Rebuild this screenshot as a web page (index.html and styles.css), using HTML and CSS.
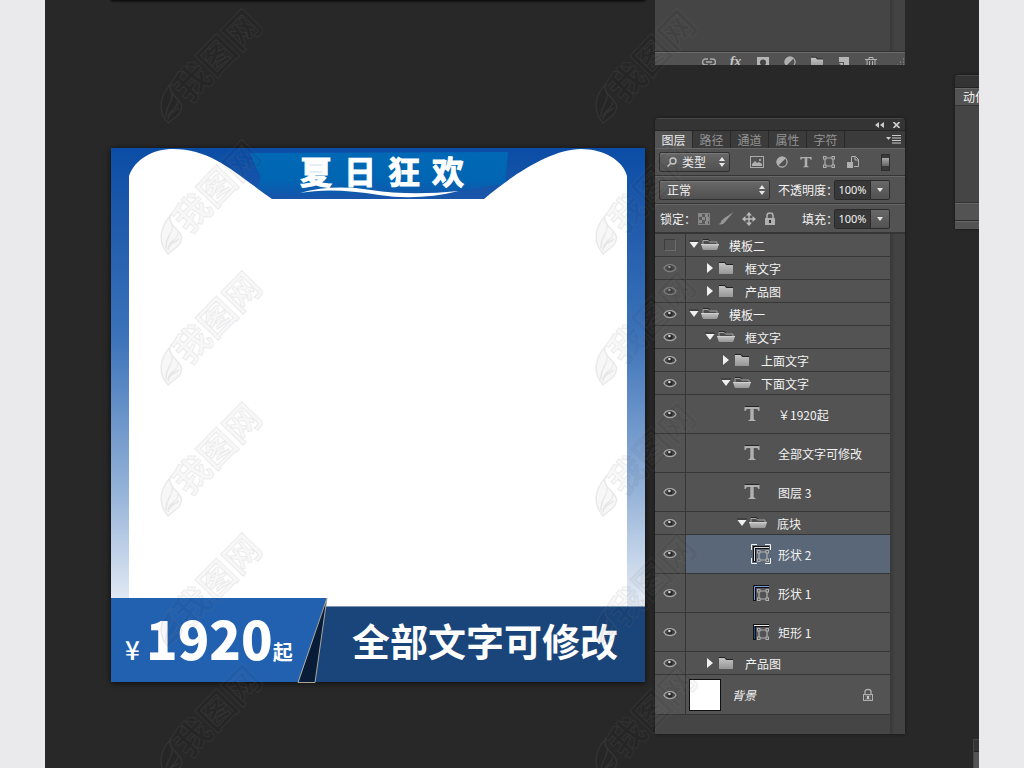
FILE: index.html
```html
<!DOCTYPE html>
<html lang="zh-CN">
<head>
<meta charset="utf-8">
<title>图层</title>
<link rel="stylesheet" href="styles.css">
</head>
<body>
<svg class="defs" aria-hidden="true">
  <defs>
    <linearGradient id="metal" x1="0" y1="0" x2="0" y2="1"><stop offset="0" stop-color="#c4c4c4"/><stop offset="1" stop-color="#969696"/></linearGradient>
    <symbol id="eye" viewBox="0 0 14 12"><path d="M1 6.2C3 1.4 11 1.4 13 6.2C11 10.6 3 10.6 1 6.2Z" fill="#484848" stroke="#a9a9a9" stroke-width="1.3"/><circle cx="7" cy="5.8" r="2.6" fill="#262626"/><circle cx="6.4" cy="5" r="1.3" fill="#d8d8d8"/></symbol>
    <symbol id="down" viewBox="0 0 10 10"><path d="M0 1H10" stroke="#333"/><path d="M.5 2H9.5L5 8Z" fill="#f0f0f0"/></symbol>
    <symbol id="right" viewBox="0 0 10 10"><path d="M2 0V10L8 5Z" fill="#f0f0f0"/></symbol>
    <symbol id="folder" viewBox="0 0 18 14"><path d="M2 1.5H8L9.5 3.5H16" fill="none" stroke="#222"/><path d="M2 2H7.5L9 4H16V13H2Z" fill="url(#metal)"/></symbol>
    <symbol id="folder-open" viewBox="0 0 18 14"><path d="M2 7V2.5H7L8.5 4H16V7" fill="#4c4c4c" stroke="#a5a5a5"/><path d="M2 1.5H7.5L9 3" fill="none" stroke="#252525"/><path d="M0 6H18L16.5 11Q16.3 12 15 12H3Q1.7 12 1.5 11Z" fill="url(#metal)"/><path d="M0 6.5H18" stroke="#d0d0d0"/></symbol>
    <symbol id="type" viewBox="0 0 16 16"><path d="M1 .5H15" stroke="#252525"/><path d="M.5 1H15.5V5H14.4Q14 2.9 12.5 2.9H9.7V12.5Q9.7 14 11.5 14V15H4.5V14Q6.3 14 6.3 12.5V2.9H3.5Q2 2.9 1.6 5H.5Z" fill="#b0b0b0"/></symbol>
    <symbol id="nodes" viewBox="0 0 12 12"><path d="M2 2H10V10H2Z" fill="none" stroke="#b0b0b0" stroke-width="1.2"/><g fill="#555" stroke="#b0b0b0"><rect x=".5" y=".5" width="2.5" height="2.5"/><rect x="9" y=".5" width="2.5" height="2.5"/><rect x=".5" y="9" width="2.5" height="2.5"/><rect x="9" y="9" width="2.5" height="2.5"/></g></symbol>
    <symbol id="lock" viewBox="0 0 12 14"><path d="M3 7V3.6Q3 1 6 1Q9 1 9 3.6V7" fill="none" stroke="#b0b0b0" stroke-width="1.6"/><rect x="1" y="6" width="10" height="7" fill="#b0b0b0"/><path d="M6 8V11" stroke="#333" stroke-width="2"/></symbol>
    <symbol id="lock-open" viewBox="0 0 12 14"><path d="M3 6V3.6Q3 1.5 6 1.5Q9 1.5 9 3.6V6" fill="none" stroke="#b0b0b0" stroke-width="1.3"/><rect x="1.5" y="6.5" width="9" height="6" fill="#555" stroke="#b0b0b0"/><path d="M3 8H9M3 11H9" stroke="#888"/><path d="M6 8V11" stroke="#c8c8c8" stroke-width="2"/></symbol>
    <symbol id="updown" viewBox="0 0 6 10"><path d="M0 4L3 0L6 4ZM0 6H6L3 10Z" fill="#e6e6e6"/></symbol>
    <symbol id="adjust" viewBox="0 0 12 12"><circle cx="6" cy="6" r="5.5" fill="#b0b0b0"/><path d="M9.6 2.4L2.4 9.6A5 5 0 0 0 9.6 2.4Z" fill="#505050"/><circle cx="6" cy="6" r="5" fill="none" stroke="#b0b0b0"/></symbol>
    <symbol id="leaf" viewBox="0 0 24 44"><path d="M9 43C-3 30 1 14 11 3C9 13 22 18 23 25C24 34 15 37 9 43ZM7 37C5 25 15 22 13 12M9 39C8 29 20 29 19 20M10 36C12 30 17 31 20 27" /></symbol>
  </defs>
</svg>

<main class="workspace">
  <div class="upper-doc"></div>

  <section class="poster">
    <svg class="poster-art" viewBox="0 0 534 534" aria-hidden="true">
      <defs>
        <linearGradient id="sky" x1="0" y1="0" x2="0" y2="1"><stop offset="0" stop-color="#0b4da6"/><stop offset=".12" stop-color="#1d59ab"/><stop offset=".35" stop-color="#3b72b9"/><stop offset=".65" stop-color="#97b4d9"/><stop offset=".84" stop-color="#dfe8f3"/><stop offset="1" stop-color="#fff"/></linearGradient>
        <linearGradient id="band" x1="0" y1="0" x2="0" y2="1"><stop offset="0" stop-color="#0068b4"/><stop offset=".6" stop-color="#0066b3"/><stop offset="1" stop-color="#1455aa"/></linearGradient>
      </defs>
      <rect width="534" height="534" fill="url(#sky)"/>
      <path d="M139 5L397 4L394 36L340 44L160 49L146 40L150 30Z" fill="url(#band)"/>
      <path d="M18 460V28C24 11 42 1 62 1C101 1 124 25 161 51H373C400 28 440 1 470 1C492 1 512 12 516 28V460Z" fill="#fff"/>
      <path d="M189 45Q221 36 260 42T348 43Q307 53 268 47Q221 39 189 45Z" fill="#fff"/>
      <path d="M205 458H534V534H200Z" fill="#1a457a"/>
      <path d="M205 458.500H534" stroke="#7b93b3"/>
      <path d="M0 450H216L187 534H0Z" fill="#2261b0"/>
      <path d="M216 450L187 534.500H204Z" fill="#081c38" stroke="#aaa69d"/>
    </svg>
    <h1 class="poster-title"><span>夏</span><span>日</span><span>狂</span><span>欢</span></h1>
    <div class="poster-foot">
      <p class="price"><span class="yen">¥</span><strong>1920</strong><span class="from">起</span></p>
      <p class="slogan">全部文字可修改</p>
    </div>
  </section>

  <section class="panel upper-panel">
    <div class="panel-space"><div class="scroll-track"></div></div>
    <div class="tools">
      <button aria-label="链接"><svg width="14" height="12" viewBox="0 0 14 12" fill="none" stroke="#aaa" stroke-width="1.400"><path d="M6 3H3.500A3 3 0 0 0 3.500 9H6M8 3H10.500A3 3 0 0 1 10.500 9H8M4 6H10"/></svg></button>
      <button aria-label="效果" class="fx">fx</button>
      <button aria-label="蒙版"><svg width="14" height="12" viewBox="0 0 14 12"><path d="M1 1H13V12H1Z" fill="#b5b5b5"/><circle cx="7" cy="6.500" r="3" fill="#444"/></svg></button>
      <button aria-label="调整"><svg width="12" height="12"><use href="#adjust"/></svg></button>
      <button aria-label="新建组"><svg width="16" height="12"><use href="#folder"/></svg></button>
      <button aria-label="新建图层"><svg width="12" height="12" viewBox="0 0 12 12"><path d="M1 1H11V11H6V6H1Z" fill="#b5b5b5"/><path d="M1 7H5V11Z" fill="#b5b5b5"/></svg></button>
      <button aria-label="删除"><svg width="12" height="14" viewBox="0 0 12 14" fill="none" stroke="#b5b5b5"><path d="M0 3.500H12M4 3V1.500H8V3M2 4V14M4.500 5V14M7.500 5V14M10 4V14"/></svg></button>
      <svg class="grip" width="8" height="8" viewBox="0 0 8 8"><path d="M6 1H7M3 4H4M6 4H7M0 7H1M3 7H4M6 7H7" stroke="#999"/></svg>
    </div>
  </section>

  <section class="panel layers">
    <header class="titlebar">
      <button aria-label="折叠"><svg width="9" height="6" viewBox="0 0 9 6"><path d="M4 0V6L0 3ZM9 0V6L5 3Z" fill="#ccc"/></svg></button>
      <button aria-label="关闭"><svg width="7" height="6" viewBox="0 0 7 6"><path d="M.5 0L6.500 6M6.500 0L.5 6" stroke="#ccc" stroke-width="1.600"/></svg></button>
    </header>
    <nav class="tabs">
      <button class="active">图层</button><button>路径</button><button>通道</button><button>属性</button><button>字符</button>
      <button class="menu" aria-label="菜单"><svg width="15" height="9" viewBox="0 0 15 9"><path d="M0 2H5L2.500 5Z" fill="#ccc"/><path d="M6 .5H15M6 3H15M6 5.500H15M6 8H15" stroke="#ccc"/></svg></button>
    </nav>
    <div class="options">
      <label class="pick kind"><svg width="10" height="10" viewBox="0 0 10 10" fill="none" stroke="#ccc" stroke-width="1.400"><circle cx="6" cy="4" r="3"/><path d="M4 6L.5 9.500"/></svg><select aria-label="筛选"><option>类型</option></select><svg width="6" height="10"><use href="#updown"/></svg></label>
      <div class="filters">
        <button aria-label="像素"><svg width="14" height="12" viewBox="0 0 14 12"><rect x=".5" y=".5" width="13" height="11" fill="none" stroke="#aaa"/><path d="M2 10V8L5 5L7 7L9 6L12 8V10Z" fill="#b0b0b0"/><circle cx="10" cy="4" r="1" fill="#bbb"/></svg></button>
        <button aria-label="调整图层"><svg width="12" height="12"><use href="#adjust"/></svg></button>
        <button aria-label="文字"><svg width="12" height="12"><use href="#type"/></svg></button>
        <button aria-label="形状"><svg width="12" height="12"><use href="#nodes"/></svg></button>
        <button aria-label="智能对象"><svg width="12" height="14" viewBox="0 0 12 14"><path d="M4.500 7V1.500H8.500L11.500 4.500V11.500H7" fill="none" stroke="#b0b0b0"/><path d="M8 1V5H12" fill="none" stroke="#b0b0b0"/><rect x="0" y="7" width="6" height="6" fill="#b0b0b0"/></svg></button>
        <button class="toggle" aria-label="开关"><i></i></button>
      </div>
    </div>
    <div class="options">
      <label class="pick mode"><select aria-label="混合模式"><option>正常</option></select><svg width="6" height="10"><use href="#updown"/></svg></label>
      <label class="name" for="opacity">不透明度：</label>
      <span class="value"><input id="opacity" value="100%"><button aria-label="不透明度选项"><svg width="6" height="4" viewBox="0 0 6 4"><path d="M0 0H6L3 4Z" fill="#e6e6e6"/></svg></button></span>
    </div>
    <div class="options last">
      <span class="locks"><span class="name">锁定：</span>
        <button aria-label="锁定透明像素"><svg width="12" height="12" viewBox="0 0 12 12"><rect x=".5" y=".5" width="11" height="11" fill="#5a5a5a" stroke="#848484"/><path d="M1 1H4V4H1ZM7 1H10V4H7ZM4 4H7V7H4ZM8 4H11V8H8ZM1 7H4V10H1ZM7 8H10V11H7Z" fill="#8c8c8c"/></svg></button>
        <button aria-label="锁定图像"><svg width="16" height="14" viewBox="0 0 16 14"><path d="M15.500 0L7.500 9.500L5 7Z" fill="#999"/><path d="M0 12Q3 12 3.500 8.500Q5.500 6 7.500 9.500Q5 13.500 0 12Z" fill="#999"/></svg></button>
        <button aria-label="锁定位置"><svg width="14" height="14" viewBox="0 0 14 14"><path d="M7 3V11M3 7H11" stroke="#bbb" stroke-width="1.400"/><path d="M4 3.500L7 0L10 3.500ZM4 10.500L7 14L10 10.500ZM3.500 4L0 7L3.500 10ZM10.500 4L14 7L10.500 10Z" fill="#bbb"/></svg></button>
        <button aria-label="锁定全部"><svg width="12" height="14"><use href="#lock"/></svg></button>
      </span>
      <label class="name" for="fill">填充：</label>
      <span class="value"><input id="fill" value="100%"><button aria-label="填充选项"><svg width="6" height="4" viewBox="0 0 6 4"><path d="M0 0H6L3 4Z" fill="#e6e6e6"/></svg></button></span>
    </div>
    <div class="list-area">
      <ul class="list">
        <li class="row"><button class="vis" aria-label="显示"><i class="empty"></i></button><div class="item"><svg class="arrow"><use href="#down"/></svg><svg class="dir"><use href="#folder-open"/></svg><span>模板二</span></div></li>
        <li class="row"><button class="vis dim" aria-label="隐藏"><svg><use href="#eye"/></svg></button><div class="item in1"><svg class="arrow"><use href="#right"/></svg><svg class="dir"><use href="#folder"/></svg><span>框文字</span></div></li>
        <li class="row"><button class="vis dim" aria-label="隐藏"><svg><use href="#eye"/></svg></button><div class="item in1"><svg class="arrow"><use href="#right"/></svg><svg class="dir"><use href="#folder"/></svg><span>产品图</span></div></li>
        <li class="row"><button class="vis" aria-label="隐藏"><svg><use href="#eye"/></svg></button><div class="item"><svg class="arrow"><use href="#down"/></svg><svg class="dir"><use href="#folder-open"/></svg><span>模板一</span></div></li>
        <li class="row"><button class="vis" aria-label="隐藏"><svg><use href="#eye"/></svg></button><div class="item in1"><svg class="arrow"><use href="#down"/></svg><svg class="dir"><use href="#folder-open"/></svg><span>框文字</span></div></li>
        <li class="row"><button class="vis" aria-label="隐藏"><svg><use href="#eye"/></svg></button><div class="item in2"><svg class="arrow"><use href="#right"/></svg><svg class="dir"><use href="#folder"/></svg><span>上面文字</span></div></li>
        <li class="row"><button class="vis" aria-label="隐藏"><svg><use href="#eye"/></svg></button><div class="item in2"><svg class="arrow"><use href="#down"/></svg><svg class="dir"><use href="#folder-open"/></svg><span>下面文字</span></div></li>
        <li class="row tall"><button class="vis" aria-label="隐藏"><svg><use href="#eye"/></svg></button><div class="item leafy"><svg class="letter"><use href="#type"/></svg><span>￥1920起</span></div></li>
        <li class="row tall"><button class="vis" aria-label="隐藏"><svg><use href="#eye"/></svg></button><div class="item leafy"><svg class="letter"><use href="#type"/></svg><span>全部文字可修改</span></div></li>
        <li class="row tall"><button class="vis" aria-label="隐藏"><svg><use href="#eye"/></svg></button><div class="item leafy"><svg class="letter"><use href="#type"/></svg><span>图层 3</span></div></li>
        <li class="row"><button class="vis" aria-label="隐藏"><svg><use href="#eye"/></svg></button><div class="item in3"><svg class="arrow"><use href="#down"/></svg><svg class="dir"><use href="#folder-open"/></svg><span>底块</span></div></li>
        <li class="row tall selected"><button class="vis" aria-label="隐藏"><svg><use href="#eye"/></svg></button><div class="item leafy"><svg class="shape" viewBox="0 0 20 20"><path d="M.5 6V.5H6M14 .5H19.500V6M19.500 14V19.500H14M6 19.500H.5V14" fill="none" stroke="#f4f4f4"/><path d="M3.500 18V3.500H18" fill="none" stroke="#111" stroke-width="3"/><path d="M3.500 17V3.500H18" fill="none" stroke="#ddd"/><use href="#nodes" x="6" y="6" width="12" height="12"/></svg><span>形状 2</span></div></li>
        <li class="row tall"><button class="vis" aria-label="隐藏"><svg><use href="#eye"/></svg></button><div class="item leafy"><svg class="shape" viewBox="0 0 20 20"><path d="M3.500 18V3.500H18" fill="none" stroke="#111" stroke-width="3"/><path d="M3.500 17V3.500H18" fill="none" stroke="#7896dc"/><use href="#nodes" x="6" y="6" width="12" height="12"/></svg><span>形状 1</span></div></li>
        <li class="row tall"><button class="vis" aria-label="隐藏"><svg><use href="#eye"/></svg></button><div class="item leafy"><svg class="shape" viewBox="0 0 20 20"><path d="M3.500 18V3.500H18" fill="none" stroke="#111" stroke-width="3"/><path d="M3.500 17V4" stroke="#174c8b"/><path d="M3 3.500H18" stroke="#eee"/><use href="#nodes" x="6" y="6" width="12" height="12"/></svg><span>矩形 1</span></div></li>
        <li class="row"><button class="vis" aria-label="隐藏"><svg><use href="#eye"/></svg></button><div class="item in1"><svg class="arrow"><use href="#right"/></svg><svg class="dir"><use href="#folder"/></svg><span>产品图</span></div></li>
        <li class="row tall base"><button class="vis" aria-label="隐藏"><svg><use href="#eye"/></svg></button><div class="item"><i class="thumb"></i><em>背景</em><svg class="locked"><use href="#lock-open"/></svg></div></li>
      </ul>
      <div class="scroll-track"></div>
    </div>
  </section>

  <section class="panel actions">
    <header class="titlebar"></header>
    <div class="action-tab">动作</div>
    <div class="action-space"></div>
    <div class="action-bar"></div>
    <div class="action-end"></div>
  </section>
  <section class="panel corner"><header class="titlebar"></header></section>

  <div class="marks" aria-hidden="true">
    <div class="mark"><svg><use href="#leaf"/></svg><b>我图网</b></div><div class="mark"><svg><use href="#leaf"/></svg><b>我图网</b></div>
    <div class="mark"><svg><use href="#leaf"/></svg><b>我图网</b></div><div class="mark"><svg><use href="#leaf"/></svg><b>我图网</b></div>
    <div class="mark"><svg><use href="#leaf"/></svg><b>我图网</b></div><div class="mark"><svg><use href="#leaf"/></svg><b>我图网</b></div>
    <div class="mark"><svg><use href="#leaf"/></svg><b>我图网</b></div><div class="mark"><svg><use href="#leaf"/></svg><b>我图网</b></div>
    <div class="mark"><svg><use href="#leaf"/></svg><b>我图网</b></div><div class="mark"><svg><use href="#leaf"/></svg><b>我图网</b></div>
    <div class="mark"><svg><use href="#leaf"/></svg><b>我图网</b></div><div class="mark"><svg><use href="#leaf"/></svg><b>我图网</b></div>
  </div>
</main>
</body>
</html>
```
FILE: styles.css
```css
* { box-sizing: border-box; }
body { margin: 0; background: #eaeaec; color: #f2f2f2; font: 12px/16px "Noto Sans CJK SC", sans-serif; overflow: hidden; }
button, select, input { margin: 0; padding: 0; border: 0; background: none; color: inherit; font: inherit; }
svg { display: block; flex: none; }
h1, p, ul { margin: 0; padding: 0; list-style: none; }
.defs { position: absolute; width: 0; height: 0; }
.workspace { position: relative; height: 100vh; margin: 0 45px; background: #282828; overflow: hidden; }
.upper-doc { position: absolute; top: -10px; left: 66px; width: 534px; height: 10px; box-shadow: 0 1px 3px #000; }

/* poster document */
.poster { position: absolute; left: 66px; top: 148px; width: 534px; height: 534px; display: flex; flex-direction: column; justify-content: space-between; box-shadow: 0 1px 6px #0c0c0c; color: #fff; }
.poster-art { position: absolute; inset: 0; width: 100%; height: 100%; overflow: visible; }
.poster-title { position: relative; display: flex; justify-content: center; gap: 12px; padding: 3px 0 0 8px; font-size: 32px; line-height: 38px; font-weight: 700; -webkit-text-stroke: 1px #fff; }
.poster-foot { position: relative; display: flex; height: 84px; font-weight: 700; }
.price { display: flex; align-items: baseline; width: 216px; padding-left: 14px; }
.price span { font-size: 20px; line-height: 80px; }
.price .yen { width: 21px; font-size: 26px; font-weight: 500; }
.price strong { font-size: 52px; line-height: 80px; }
.slogan { flex: 1; padding: 6px 0 0 25px; font-size: 38px; line-height: 72px; white-space: nowrap; }

/* panels */
.panel { position: absolute; background: #454545; }
.scroll-track { width: 15px; flex: none; background: linear-gradient(90deg, #383838, #434343 5px, #434343); }
.upper-panel { left: 610px; top: 0; width: 250px; height: 65px; overflow: hidden; }
.panel-space { height: 51px; display: flex; justify-content: flex-end; }
.tools { display: flex; align-items: flex-start; height: 14px; padding: 4px 0 0 40px; border-top: 1px solid #303030; box-shadow: inset 0 1px #6c6c6c; background: #525252; }
.tools button { display: flex; justify-content: center; width: 27px; height: 14px; }
.tools .fx { font: italic 700 14px/12px "Liberation Serif", serif; color: #c5c5c5; }
.grip { margin: 2px 0 0 13px; }
.layers { left: 610px; top: 118px; width: 250px; height: 616px; display: flex; flex-direction: column; border-radius: 4px 4px 0 0; box-shadow: 0 0 3px #151515; overflow: hidden; }
.titlebar { display: flex; justify-content: flex-end; align-items: center; gap: 9px; height: 13px; flex: none; padding-right: 5px; background: #343434; border-top: 1px solid #464646; border-bottom: 1px solid #242424; }
.tabs { display: flex; height: 17px; flex: none; background: #3b3b3b; }
.tabs button { width: 38px; border-right: 1px solid #2a2a2a; color: #939393; line-height: 17px; }
.tabs .active { background: #535353; color: #ececec; }
.tabs .menu { display: flex; align-items: center; justify-content: flex-end; flex: 1; padding-right: 4px; border: 0; }
.options { display: flex; align-items: center; height: 28px; flex: none; padding: 0 15px 0 4px; background: #535353; border-top: 1px solid #666; border-bottom: 1px solid #353535; }
.options.last { height: 29px; }
.pick { display: flex; align-items: center; gap: 5px; height: 20px; padding: 0 4px 0 7px; border: 1px solid #303030; border-radius: 2px; background: linear-gradient(#686868, #505050); box-shadow: inset 0 1px #7a7a7a; }
.pick select { flex: 1; min-width: 0; appearance: none; line-height: 16px; }
.kind { width: 71px; }
.mode { width: 111px; }
.filters { display: flex; align-items: center; justify-content: space-between; flex: 1; padding-left: 20px; }
.filters .toggle { width: 9px; height: 17px; margin-left: 10px; border: 1px solid #2e2e2e; background: #3a3a3a; }
.toggle i { display: block; height: 8px; background: linear-gradient(#aaa, #666); }
.name { margin: 0 -4px 0 auto; white-space: nowrap; }
.locks { display: flex; align-items: center; gap: 8px; padding-left: 1px; }
.locks .name { width: 30px; margin: 0; }
.value { display: flex; width: 56px; height: 20px; border: 1px solid #2a2a2a; border-radius: 2px; overflow: hidden; }
.value input { width: 35px; text-align: center; background: #383838; font: 11px/18px "Noto Sans", sans-serif; }
.value button { display: flex; align-items: center; justify-content: center; flex: 1; border-left: 1px solid #2a2a2a; background: linear-gradient(#686868, #525252); }

/* layer tree */
.list-area { display: flex; flex: 1; border-top: 1px solid #353535; }
.list { flex: 1; }
.row { display: flex; height: 23px; background: #535353; border-bottom: 1px solid #363636; }
.row.tall { height: 39px; }
.row.base { height: 40px; }
.vis { display: flex; align-items: center; justify-content: center; width: 31px; border-right: 1px solid #363636; }
.vis svg { width: 14px; height: 12px; }
.vis.dim svg { opacity: .5; }
.empty { width: 12px; height: 12px; border: 1px solid #3c3c3c; border-right-color: #6b6b6b; border-bottom-color: #6b6b6b; }
.item { display: flex; align-items: center; flex: 1; padding: 0 16px 0 3px; white-space: nowrap; }
.item span { padding-top: 2px; }
.in1 { padding-left: 19px; }
.in2 { padding-left: 35px; }
.in3 { padding-left: 51px; }
.leafy { padding-left: 58px; }
.arrow { width: 10px; height: 10px; margin-right: 2px; }
.dir { width: 18px; height: 14px; margin-right: 10px; }
.letter { width: 16px; height: 16px; margin-right: 18px; }
.shape { width: 20px; height: 20px; margin: 0 7px; }
.selected .item { background: #5a6778; }
.thumb { width: 32px; height: 32px; margin-right: 11px; background: #fff; border: 1px solid #111; }
.locked { width: 12px; height: 14px; margin-left: auto; }

/* clipped side panels */
.actions { left: 910px; top: 75px; width: 150px; border-radius: 4px 0 0; overflow: hidden; box-shadow: 0 0 3px #151515; }
.action-tab { height: 18px; padding-left: 8px; line-height: 16px; background: #535353; border-top: 1px solid #666; border-bottom: 1px solid #343434; }
.action-space { height: 97px; border-bottom: 1px solid #343434; }
.action-bar { height: 18px; background: #535353; border-top: 1px solid #666; border-bottom: 1px solid #2b2b2b; }
.action-end { height: 8px; background: #535353; border-top: 1px solid #666; }
.corner { left: 928px; top: 739px; width: 80px; height: 40px; background: #535353; border-left: 1px solid #444; }

/* repeating watermark */
.marks { position: absolute; left: 112px; top: 6px; display: grid; grid-template-columns: 435px 110px; grid-auto-rows: 131px; pointer-events: none; }
.mark { position: relative; width: 110px; height: 120px; }
.mark svg { position: absolute; left: 2px; top: 76px; width: 24px; height: 42px; fill: rgba(0, 0, 0, .03); stroke: rgba(130, 130, 130, .14); stroke-width: 1.5; }
.mark b { position: absolute; left: 3px; top: 24px; width: 110px; text-align: center; font-size: 36px; line-height: 48px; font-weight: 700; color: rgba(0, 0, 0, .05); -webkit-text-stroke: 1px rgba(130, 130, 130, .14); transform: rotate(-46deg); }
```
